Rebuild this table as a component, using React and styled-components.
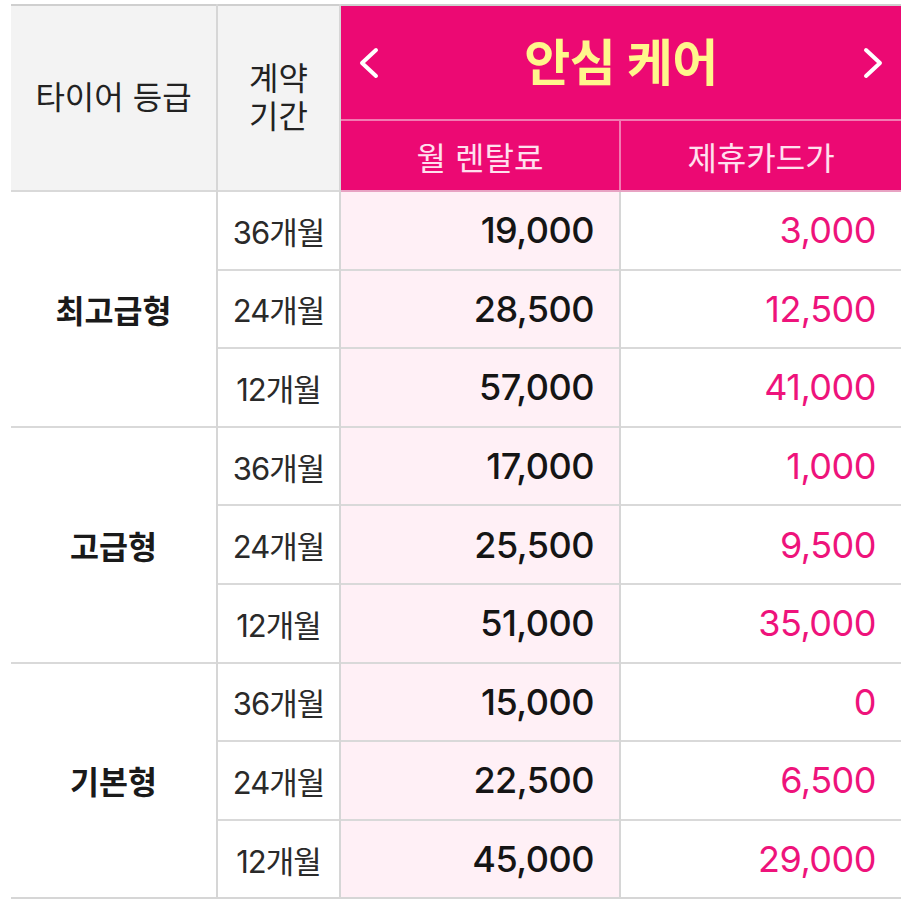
import React from 'react'
import styled, { createGlobalStyle } from 'styled-components'

const GlobalStyle = createGlobalStyle`
    html, body {
        margin: 0;
        padding: 0;
        background: #ffffff;
    }
    body {
        font-family: Inter, "Noto Sans CJK KR", sans-serif;
        color: #222222;
    }
`

const plans = [
    { grade: '최고급형', rows: [ [ '36개월', '19,000', '3,000' ], [ '24개월', '28,500', '12,500' ], [ '12개월', '57,000', '41,000' ] ] },
    { grade: '고급형', rows: [ [ '36개월', '17,000', '1,000' ], [ '24개월', '25,500', '9,500' ], [ '12개월', '51,000', '35,000' ] ] },
    { grade: '기본형', rows: [ [ '36개월', '15,000', '0' ], [ '24개월', '22,500', '6,500' ], [ '12개월', '45,000', '29,000' ] ] }
]

const Page = styled.div`
    padding: 4px 7px 7px 11px;
`

const Table = styled.table`
    width: 890px;
    border-collapse: collapse;
    table-layout: fixed;
    border-top: 2px solid #cfcfcf;
    border-bottom: 2px solid #d6d6d6;
`

const HeadCell = styled.th`
    height: 184px;
    padding: 0;
    background: #f3f3f3;
    border-right: 2px solid #d6d6d6;
    font-size: 32px;
    font-weight: 400;
    line-height: 38px;
    color: #222222;
`

const TitleCell = styled.th`
    height: 113px;
    padding: 0;
    background: #ec0973;
    border-bottom: 2px solid #f27ab2;
`

const TitleBar = styled.div`
    display: flex;
    align-items: center;
    justify-content: space-between;
    padding: 0 17px;
    color: #fff68c;
    font-size: 50px;
    line-height: 60px;
    font-weight: 700;
    letter-spacing: -0.5px;
`

const Arrow = styled.button`
    display: flex;
    align-items: center;
    justify-content: center;
    width: 22px;
    height: 40px;
    padding: 0;
    border: 0;
    background: none;
    cursor: pointer;
`

const SubCell = styled.th`
    height: 69px;
    padding: 0;
    background: #ec0973;
    border-left: ${p => (p.$divider ? '2px solid #f27ab2' : '0')};
    border-bottom: 2px solid #e8a3c3;
    color: #ffe0ee;
    font-size: 32px;
    font-weight: 400;
`

const Row = styled.tr`
    height: 78.6px;
    border-top: 2px solid #d9d9d9;
`

const GradeCell = styled.td`
    padding: 0;
    text-align: center;
    font-size: 31.5px;
    font-weight: 700;
    color: #1a1a1a;
    border-right: 2px solid #d6d6d6;
`

const PeriodCell = styled.td`
    padding: 0;
    text-align: center;
    font-size: 31px;
    color: #2a2a2a;
    letter-spacing: -1px;
    border-right: 2px solid #d6d6d6;
`

const PriceCell = styled.td`
    padding: 0 25px 0 0;
    text-align: right;
    font-size: 36px;
    font-weight: ${p => (p.$card ? 400 : 500)};
    color: ${p => (p.$card ? '#ee137b' : '#151515')};
    background: ${p => (p.$card ? '#ffffff' : '#fff0f6')};
    border-right: ${p => (p.$card ? '0' : '2px solid #d6d6d6')};
    letter-spacing: -0.5px;
`

const Chevron = ({ dir }) => (
    <svg width="22" height="34" viewBox="0 0 22 34" fill="none">
        <path
            d={dir === 'left' ? 'M18 4 L4 17 L18 30' : 'M4 4 L18 17 L4 30'}
            stroke="#ffffff"
            strokeWidth="4"
            strokeLinecap="round"
            strokeLinejoin="round"
        />
    </svg>
)

const App = () => {
    return (
        <Page>
            <GlobalStyle />
            <Table>
                <colgroup>
                    <col style={{ width: 206 }} />
                    <col style={{ width: 123 }} />
                    <col style={{ width: 280 }} />
                    <col style={{ width: 281 }} />
                </colgroup>
                <thead>
                    <tr>
                        <HeadCell rowSpan={2}>타이어 등급</HeadCell>
                        <HeadCell rowSpan={2}>계약<br />기간</HeadCell>
                        <TitleCell colSpan={2}>
                            <TitleBar>
                                <Arrow aria-label="이전"><Chevron dir="left" /></Arrow>
                                <span>안심 케어</span>
                                <Arrow aria-label="다음"><Chevron dir="right" /></Arrow>
                            </TitleBar>
                        </TitleCell>
                    </tr>
                    <tr>
                        <SubCell>월 렌탈료</SubCell>
                        <SubCell $divider>제휴카드가</SubCell>
                    </tr>
                </thead>
                <tbody>
                    {plans.map(plan =>
                        plan.rows.map((r, i) => (
                            <Row key={plan.grade + r[0]}>
                                {i === 0 && <GradeCell rowSpan={3}>{plan.grade}</GradeCell>}
                                <PeriodCell>{r[0]}</PeriodCell>
                                <PriceCell>{r[1]}</PriceCell>
                                <PriceCell $card>{r[2]}</PriceCell>
                            </Row>
                        ))
                    )}
                </tbody>
            </Table>
        </Page>
    )
}

export default App
